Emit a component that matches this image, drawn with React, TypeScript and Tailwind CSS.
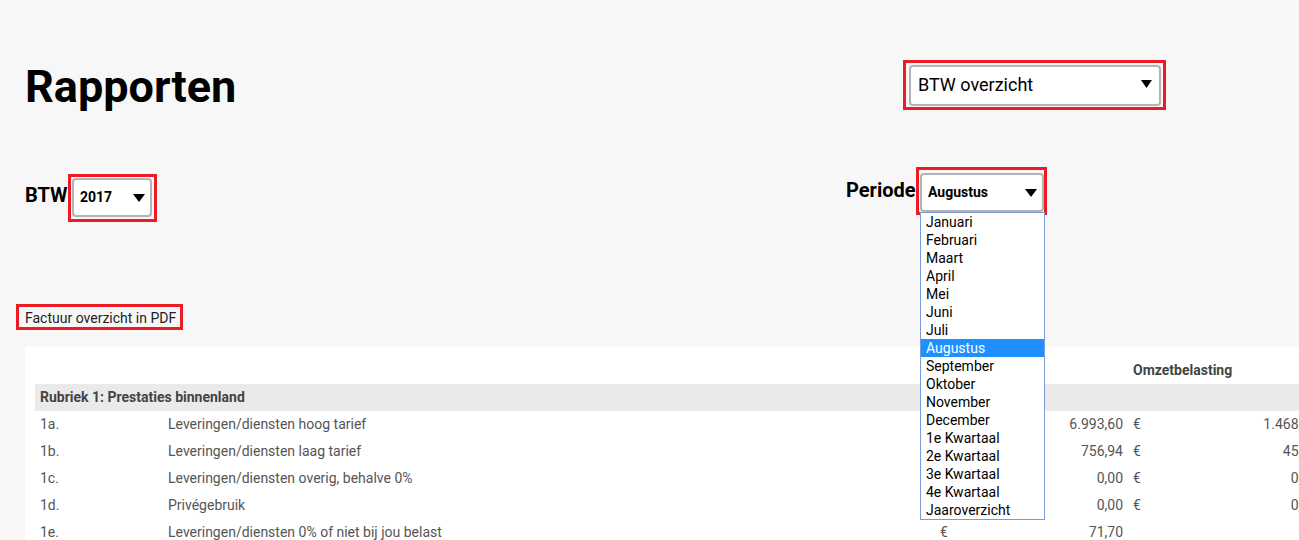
import React from "react";

const months = [
  "Januari",
  "Februari",
  "Maart",
  "April",
  "Mei",
  "Juni",
  "Juli",
  "Augustus",
  "September",
  "Oktober",
  "November",
  "December",
  "1e Kwartaal",
  "2e Kwartaal",
  "3e Kwartaal",
  "4e Kwartaal",
  "Jaaroverzicht",
];

const rows: { code: string; desc: string; amount: string; tax?: string }[] = [
  { code: "1a.", desc: "Leveringen/diensten hoog tarief", amount: "6.993,60", tax: "1.468,66" },
  { code: "1b.", desc: "Leveringen/diensten laag tarief", amount: "756,94", tax: "45,42" },
  { code: "1c.", desc: "Leveringen/diensten overig, behalve 0%", amount: "0,00", tax: "0,00" },
  { code: "1d.", desc: "Privégebruik", amount: "0,00", tax: "0,00" },
  { code: "1e.", desc: "Leveringen/diensten 0% of niet bij jou belast", amount: "71,70" },
];

function Arrow({ w = 11, h = 8 }: { w?: number; h?: number }) {
  return (
    <svg width={w} height={h} viewBox={`0 0 ${w} ${h}`} className="block shrink-0">
      <polygon points={`0,0 ${w},0 ${w / 2},${h}`} fill="#000" />
    </svg>
  );
}

export default function App() {
  return (
    <div
      className="h-[540px] w-full overflow-hidden bg-[#f7f7f7] text-black"
      style={{ fontFamily: "Roboto, 'Noto Sans', Arial, sans-serif" }}
    >
      <div className="pl-[25px]">
        <div className="flex items-start">
          {/* left column */}
          <div className="w-[821px] shrink-0">
            <h1 className="mt-[60px] text-[45px] leading-[53px] font-bold text-black">Rapporten</h1>
            <div className="mt-[61px] flex items-start">
              <div className="mt-[9px] w-[43px] text-[20px] leading-[24px] font-bold">BTW</div>
              <div className="h-[48px] w-[89px] border-[3px] border-[#ed1c24] pl-[1px] pt-[1px]">
                <div className="flex h-[39px] w-[80px] items-center justify-between rounded-[4px] border-2 border-[#b3b3b3] bg-white pl-[6px] pr-[5px]">
                  <span className="text-[14px] leading-[17px] font-bold">2017</span>
                  <Arrow w={12} h={8} />
                </div>
              </div>
            </div>
          </div>
          {/* right column */}
          <div className="shrink-0">
            <div className="ml-[57px] mt-[60px] h-[50px] w-[263px] border-[3px] border-[#ed1c24] pl-[3px] pt-[2px]">
              <div className="flex h-[41px] w-[252px] items-center justify-between rounded-[4px] border-2 border-[#b3b3b3] bg-white pb-[3px] pl-[7px] pr-[7px]">
                <span className="text-[18px] leading-[21px]">BTW overzicht</span>
                <Arrow w={11} h={8} />
              </div>
            </div>
            <div className="relative mt-[57px] flex items-start">
              <div className="mt-[11px] w-[70px] text-[20px] leading-[24px] font-bold">Periode</div>
              <div className="relative z-10 h-[48px] w-[131px] border-[3px] border-[#ed1c24] pl-[1px] pt-[3px]">
                <div className="flex h-[39px] w-[124px] items-center justify-between rounded-[4px] border-2 border-[#b3b3b3] bg-white pl-[6px] pr-[5px]">
                  <span className="text-[14px] leading-[17px] font-bold">Augustus</span>
                  <Arrow w={12} h={8} />
                </div>
              </div>
              <ul className="absolute left-[74px] top-[45px] z-20 w-[125px] border border-[#7b9bd6] bg-white">
                {months.map((m) => (
                  <li
                    key={m}
                    className={
                      m === "Augustus"
                        ? "h-[18px] bg-[#1e90ff] pl-[5px] text-[14px] leading-[18px] text-white"
                        : "h-[18px] pl-[5px] text-[14px] leading-[18px] text-black"
                    }
                  >
                    {m}
                  </li>
                ))}
              </ul>
            </div>
          </div>
        </div>

        {/* Factuur link */}
        <div className="-ml-[9px] mt-[82px] inline-block h-[26px] w-[167px] border-[3px] border-[#ed1c24] pl-[6px] pt-[2px]">
          <span className="block text-[14px] leading-[18px] whitespace-nowrap text-[#222]">Factuur overzicht in PDF</span>
        </div>

        {/* panel */}
        <div className="mt-[17px] w-[1330px] bg-white pl-[10px] pt-[10px]">
          <div className="grid h-[27px] grid-cols-[128px_772px_193px_194px] items-center text-[14px]">
            <div />
            <div />
            <div />
            <div className="pl-[5px] font-bold text-[#444]">Omzetbelasting</div>
          </div>
          <div className="flex h-[27px] items-center bg-[#eaeaea] pl-[5px] text-[14px] font-bold text-[#444]">
            Rubriek 1: Prestaties binnenland
          </div>
          {rows.map((r) => (
            <div
              key={r.code}
              className="grid h-[27px] grid-cols-[128px_772px_193px_194px] items-center text-[14px] text-[#555]"
            >
              <div className="pl-[5px]">{r.code}</div>
              <div className="pl-[5px] whitespace-nowrap">{r.desc}</div>
              <div className="flex justify-between px-[5px]">
                <span>€</span>
                <span>{r.amount}</span>
              </div>
              <div className="flex justify-between px-[5px]">
                {r.tax ? (
                  <>
                    <span>€</span>
                    <span>{r.tax}</span>
                  </>
                ) : null}
              </div>
            </div>
          ))}
        </div>
      </div>
    </div>
  );
}
